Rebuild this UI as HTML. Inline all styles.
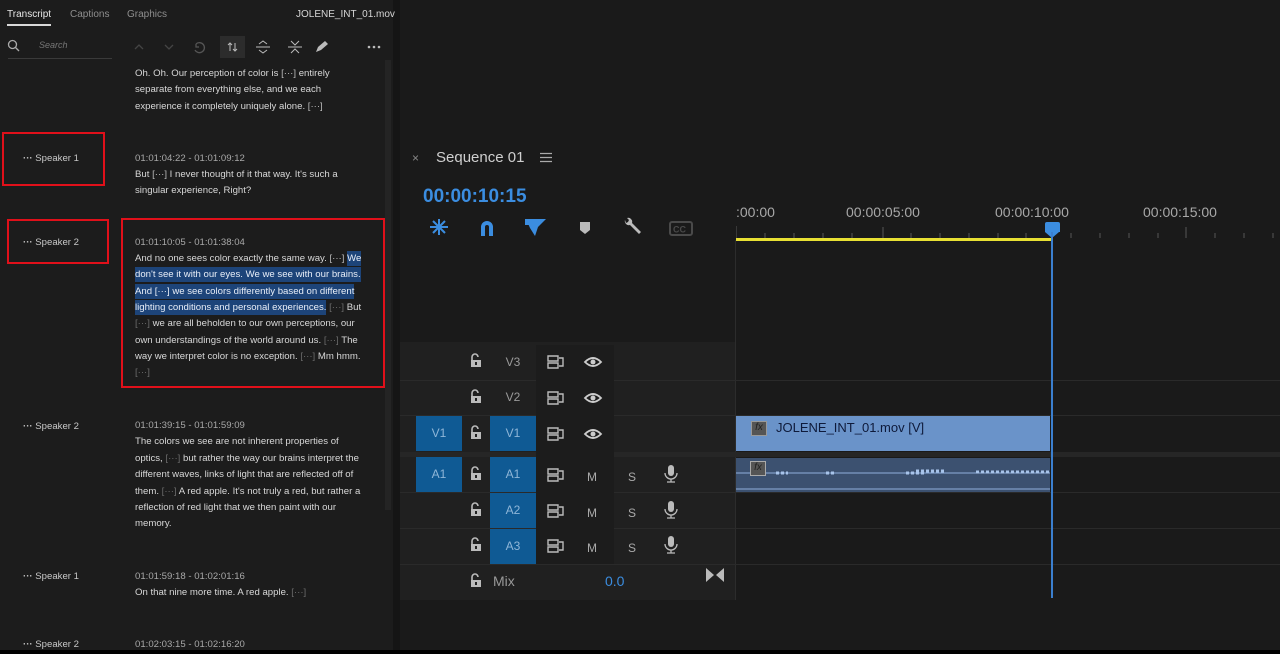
<!DOCTYPE html>
<html><head><meta charset="utf-8"><style>
*{margin:0;padding:0;box-sizing:border-box}
body{width:1280px;height:654px;background:#1a1a1a;overflow:hidden;position:relative;font-family:"Liberation Sans",sans-serif;color:#d6d6d6}
.a{position:absolute;white-space:nowrap}
.t{font-size:9.6px;color:#d8d8d8}
.ts{font-size:9.6px;color:#a8a8a8}
.sp{font-size:9.6px;color:#c8c8c8}
.e{color:#6b6b6b}
.hl{background:#1d4479;color:#e8eef8;padding:2px 0}
.box{position:absolute;border:2px solid #e0101a}
.ic{position:absolute}
.trk{position:absolute;font-size:12px;color:#9a9a9a;text-align:center}
.blue{background:#0f5a94;color:#8fb6d8}
.hd{position:absolute;height:1px;background:#2a2a2a}
</style></head><body>
<!-- left panel -->
<div class="a" style="left:0;top:0;width:393px;height:650px;background:#1c1c1c"></div>
<div class="a" style="left:393px;top:0;width:7px;height:650px;background:#151515"></div>
<div class="a" style="left:385px;top:60px;width:6px;height:450px;background:#242424"></div>
<div class="a" style="left:7px;top:9px;font-size:10px;color:#e6e6e6">Transcript</div>
<div class="a" style="left:7px;top:24px;width:44px;height:2px;background:#d8d8d8"></div>
<div class="a" style="left:70px;top:9px;font-size:10px;color:#8e8e8e">Captions</div>
<div class="a" style="left:127px;top:9px;font-size:10px;color:#8e8e8e">Graphics</div>
<div class="a" style="left:296px;top:9px;font-size:10px;color:#d6d6d6">JOLENE_INT_01.mov</div>
<svg class="ic" style="left:7px;top:39px" width="13" height="13"><circle cx="5.5" cy="5.5" r="4" stroke="#aaa" fill="none" stroke-width="1.3"/><path d="M8.5 8.5L12 12" stroke="#aaa" stroke-width="1.3"/></svg>
<div class="a" style="left:39px;top:40px;font-size:9px;color:#777;font-style:italic">Search</div>
<div class="a" style="left:8px;top:58px;width:104px;height:1px;background:#3a3a3a"></div>
<svg class="ic" style="left:133px;top:36px" width="255" height="22" fill="none" stroke-width="1.3">
<g transform="translate(0,4)">
<path d="M2 9l4-4 4 4" stroke="#444"/><path d="M32 5l4 4 4-4" stroke="#444"/>
<path d="M63 4a5 5 0 1 1-1 6M63 4v3h3" stroke="#555"/>
<rect x="87" y="-4" width="25" height="22" fill="#2c2c2c" stroke="none"/>
<path d="M97 3v8M102 3v8M95 5l2-2 2 2M100 9l2 2 2-2" stroke="#bbb" stroke-width="1"/>
<path d="M123 7h14M126 4l4-3 4 3M126 10l4 3 4-3" stroke="#bbb" stroke-width="1"/>
<path d="M155 7h14M158 1l4 4 4-4M158 13l4-4 4 4" stroke="#bbb" stroke-width="1"/>
<path d="M183 12l2-5 7-6 3 3-7 6z" fill="#bbb" stroke="none"/>
<circle cx="236" cy="7" r="1.3" fill="#bbb" stroke="none"/><circle cx="241" cy="7" r="1.3" fill="#bbb" stroke="none"/><circle cx="246" cy="7" r="1.3" fill="#bbb" stroke="none"/>
</g>
</svg>
<div class="a t" style="left:135px;top:68px">Oh. Oh. Our perception of color is <span style="color:#bbb">[···]</span> entirely</div>
<div class="a t" style="left:135px;top:84px">separate from everything else, and we each</div>
<div class="a t" style="left:135px;top:101px">experience it completely uniquely alone. <span style="color:#bbb">[···]</span></div>

<div class="box" style="left:2px;top:132px;width:103px;height:54px"></div>
<div class="a sp" style="left:23px;top:153px"><b>···</b> Speaker 1</div>
<div class="a ts" style="left:135px;top:153px">01:01:04:22 - 01:01:09:12</div>
<div class="a t" style="left:135px;top:169px">But <span style="color:#bbb">[···]</span> I never thought of it that way. It's such a</div>
<div class="a t" style="left:135px;top:185px">singular experience, Right?</div>

<div class="box" style="left:7px;top:219px;width:102px;height:45px"></div>
<div class="box" style="left:121px;top:218px;width:264px;height:170px"></div>
<div class="a sp" style="left:23px;top:237px"><b>···</b> Speaker 2</div>
<div class="a ts" style="left:135px;top:237px">01:01:10:05 - 01:01:38:04</div>
<div class="a t" style="left:135px;top:253px">And no one sees color exactly the same way. <span style="color:#bbb">[···]</span> <span class="hl">We</span></div>
<div class="a t" style="left:135px;top:269px"><span class="hl">don't see it with our eyes. We we see with our brains.</span></div>
<div class="a t" style="left:135px;top:286px"><span class="hl">And [···] we see colors differently based on different</span></div>
<div class="a t" style="left:135px;top:302px"><span class="hl">lighting conditions and personal experiences.</span> <span class="e">[···]</span> But</div>
<div class="a t" style="left:135px;top:318px"><span class="e">[···]</span> we are all beholden to our own perceptions, our</div>
<div class="a t" style="left:135px;top:335px">own understandings of the world around us. <span class="e">[···]</span> The</div>
<div class="a t" style="left:135px;top:351px">way we interpret color is no exception. <span class="e">[···]</span> Mm hmm.</div>
<div class="a t" style="left:135px;top:367px"><span class="e">[···]</span></div>

<div class="a sp" style="left:23px;top:421px"><b>···</b> Speaker 2</div>
<div class="a ts" style="left:135px;top:420px">01:01:39:15 - 01:01:59:09</div>
<div class="a t" style="left:135px;top:436px">The colors we see are not inherent properties of</div>
<div class="a t" style="left:135px;top:453px">optics, <span class="e">[···]</span> but rather the way our brains interpret the</div>
<div class="a t" style="left:135px;top:469px">different waves, links of light that are reflected off of</div>
<div class="a t" style="left:135px;top:486px">them. <span class="e">[···]</span> A red apple. It's not truly a red, but rather a</div>
<div class="a t" style="left:135px;top:502px">reflection of red light that we then paint with our</div>
<div class="a t" style="left:135px;top:518px">memory.</div>
<div class="a sp" style="left:23px;top:571px"><b>···</b> Speaker 1</div>
<div class="a ts" style="left:135px;top:571px">01:01:59:18 - 01:02:01:16</div>
<div class="a t" style="left:135px;top:587px">On that nine more time. A red apple. <span class="e">[···]</span></div>
<div class="a sp" style="left:23px;top:639px"><b>···</b> Speaker 2</div>
<div class="a ts" style="left:135px;top:639px">01:02:03:15 - 01:02:16:20</div>

<!-- right panel -->
<div class="a" style="left:400px;top:0;width:880px;height:650px;background:#1a1a1a"></div>
<div class="a" style="left:412px;top:151px;font-size:12px;color:#888">×</div>
<div class="a" style="left:436px;top:149px;font-size:15px;color:#cfcfcf">Sequence 01</div>
<svg class="ic" style="left:540px;top:152px" width="12" height="11"><path d="M0 1.5h12M0 5.5h12M0 9.5h12" stroke="#aaa" stroke-width="1.3"/></svg>
<div class="a" style="left:423px;top:186px;font-size:19px;font-weight:bold;color:#3b8de0">00:00:10:15</div>
<svg class="ic" style="left:428px;top:216px" width="270" height="22">
<g stroke="#3b8de0" stroke-width="2" fill="none"><path d="M2 11h18M11 3v16M5 5l12 12M17 5L5 17"/></g>
<path d="M53 20v-9a6 6 0 0 1 12 0v9h-4v-9a2 2 0 0 0-4 0v9z" fill="#3b8de0"/>
<path d="M98 3h20l-8 8 -3 9-5-8z" fill="#3b8de0"/><rect x="97" y="3" width="4" height="6" fill="#3b8de0"/>
<path d="M152 6h10v8l-5 4-5-4z" fill="#bbb"/>
<path d="M197 4a4 4 0 0 0 5 5l9 9 2-2-9-9a4 4 0 0 0-5-5l2 2-1 2-2 1z" fill="#bbb"/>
<rect x="242" y="6" width="22" height="13" rx="2" fill="none" stroke="#4a4a4a" stroke-width="2"/>
<text x="245" y="16.5" font-size="9" fill="#4a4a4a" font-family="Liberation Sans" font-weight="bold">CC</text>
</svg>
<!-- ruler -->
<div class="a" style="left:736px;top:204px;font-size:14px;color:#a8a8a8">:00:00</div>
<div class="a" style="left:846px;top:204px;font-size:14px;color:#a8a8a8">00:00:05:00</div>
<div class="a" style="left:995px;top:204px;font-size:14px;color:#a8a8a8">00:00:10:00</div>
<div class="a" style="left:1143px;top:204px;font-size:14px;color:#a8a8a8">00:00:15:00</div>
<svg class="ic" style="left:736px;top:222px" width="544" height="30">
<g stroke="#555" stroke-width="1">
<path d="M0 4v12M29 11v5M58 11v5M87 11v5M116 11v5M147 5v11M175 11v5M204 11v5M233 11v5M262 11v5M290 11v5M335 11v5M364 11v5M393 11v5M422 11v5M450 5v11M479 11v5M508 11v5M537 11v5"/>
</g>
<rect x="0" y="16" width="316" height="3" fill="#e8e033"/>
</svg>
<div class="a" style="left:1045px;top:222px;width:15px;height:10px;background:#3b8de0;border-radius:2px 2px 0 0"></div>
<div class="a" style="left:1045px;top:232px;width:0;height:0;border-left:7.5px solid transparent;border-right:7.5px solid transparent;border-top:6px solid #3b8de0"></div>
<div class="a" style="left:735px;top:240px;width:1px;height:360px;background:#2c2c2c"></div>

<!-- track header area -->
<div class="a" style="left:400px;top:342px;width:335px;height:258px;background:#202020"></div>
<div class="hd" style="left:400px;top:380px;width:880px"></div>
<div class="hd" style="left:400px;top:415px;width:880px"></div>
<div class="a" style="left:400px;top:452px;width:880px;height:5px;background:#262626"></div>
<div class="hd" style="left:400px;top:492px;width:880px"></div>
<div class="hd" style="left:400px;top:528px;width:880px"></div>
<div class="hd" style="left:400px;top:564px;width:880px"></div>
<div class="a" style="left:536px;top:345px;width:78px;height:219px;background:#1c1c1c"></div>

<div class="trk blue" style="left:416px;top:416px;width:46px;height:35px;line-height:35px">V1</div>
<div class="trk blue" style="left:416px;top:457px;width:46px;height:35px;line-height:35px">A1</div>
<div class="trk" style="left:490px;top:345px;width:46px;height:35px;line-height:35px">V3</div>
<div class="trk" style="left:490px;top:380px;width:46px;height:35px;line-height:35px">V2</div>
<div class="trk blue" style="left:490px;top:416px;width:46px;height:35px;line-height:35px">V1</div>
<div class="trk blue" style="left:490px;top:457px;width:46px;height:35px;line-height:35px">A1</div>
<div class="trk blue" style="left:490px;top:493px;width:46px;height:35px;line-height:35px">A2</div>
<div class="trk blue" style="left:490px;top:529px;width:46px;height:35px;line-height:35px">A3</div>
<div class="a" style="left:493px;top:573px;font-size:14px;color:#999">Mix</div>
<div class="a" style="left:605px;top:573px;font-size:14px;color:#3b8de0">0.0</div>
<svg class="ic" style="left:706px;top:568px" width="18" height="14"><path d="M0 0l8 7-8 7zM18 0l-8 7 8 7z" fill="#bbb"/></svg>

<svg class="ic" style="left:400px;top:340px" width="300" height="250">
<defs>
<g id="lk"><path d="M2 6V3a3 3 0 0 1 6 0" stroke="#bbb" stroke-width="1.6" fill="none"/><rect x="1" y="6" width="10" height="7" fill="#bbb"/><rect x="5" y="8" width="2" height="3" fill="#202020"/></g>
<g id="tg"><path d="M1 2h10v5H1zM1 9h10v5H1zM12 4h4v8h-4" stroke="#bbb" stroke-width="1.4" fill="none"/></g>
<g id="ey"><path d="M1 7q8-8 16 0q-8 8-16 0z" stroke="#ccc" stroke-width="1.8" fill="none"/><circle cx="9" cy="7" r="2.5" fill="#ccc"/></g>
<g id="mc"><rect x="4" y="0" width="6" height="11" rx="3" fill="#bbb"/><path d="M1 8a6 6 0 0 0 12 0M7 14v3M3 17h8" stroke="#bbb" stroke-width="1.3" fill="none"/></g>
</defs>
<use href="#lk" x="70" y="14"/><use href="#lk" x="70" y="50"/><use href="#lk" x="70" y="86"/><use href="#lk" x="70" y="127"/><use href="#lk" x="70" y="163"/><use href="#lk" x="70" y="198"/><use href="#lk" x="70" y="234"/>
<use href="#tg" x="147" y="14"/><use href="#tg" x="147" y="50"/><use href="#tg" x="147" y="86"/><use href="#tg" x="147" y="127"/><use href="#tg" x="147" y="163"/><use href="#tg" x="147" y="198"/>
<use href="#ey" x="184" y="15"/><use href="#ey" x="184" y="51"/><use href="#ey" x="184" y="87"/>
<text x="187" y="141" font-size="12" fill="#aaa" font-family="Liberation Sans">M</text><text x="187" y="177" font-size="12" fill="#aaa" font-family="Liberation Sans">M</text><text x="187" y="212" font-size="12" fill="#aaa" font-family="Liberation Sans">M</text>
<text x="228" y="141" font-size="12" fill="#aaa" font-family="Liberation Sans">S</text><text x="228" y="177" font-size="12" fill="#aaa" font-family="Liberation Sans">S</text><text x="228" y="212" font-size="12" fill="#aaa" font-family="Liberation Sans">S</text>
<use href="#mc" x="264" y="125"/><use href="#mc" x="264" y="161"/><use href="#mc" x="264" y="196"/>
</svg>

<!-- clips -->
<div class="a" style="left:736px;top:416px;width:314px;height:35px;background:#6a93c9"></div>
<div class="a" style="left:751px;top:421px;width:16px;height:15px;background:#555;border:1px solid #999;font-size:10px;color:#222;font-style:italic;text-align:center">fx</div>
<div class="a" style="left:776px;top:420px;font-size:13px;color:#0e1a3a">JOLENE_INT_01.mov [V]</div>
<div class="a" style="left:736px;top:458px;width:314px;height:34px;background:#3c5170"></div>
<svg class="ic" style="left:736px;top:458px" width="314" height="34"><path d="M0 15h314M0 31h314" stroke="#8fb0dd" stroke-width="1"/><path d="M40 15h12M90 15h8M170 15h20M180 13h30M240 14h80" stroke="#a8c4ea" stroke-width="3" stroke-dasharray="3 2"/></svg>
<div class="a" style="left:750px;top:461px;width:16px;height:15px;background:#555;border:1px solid #aaa;font-size:10px;color:#222;font-style:italic;text-align:center">fx</div>
<div class="a" style="left:1051px;top:232px;width:2px;height:366px;background:#3b7fcf"></div>
<div class="a" style="left:0;top:650px;width:1280px;height:4px;background:#000"></div>
</body></html>
